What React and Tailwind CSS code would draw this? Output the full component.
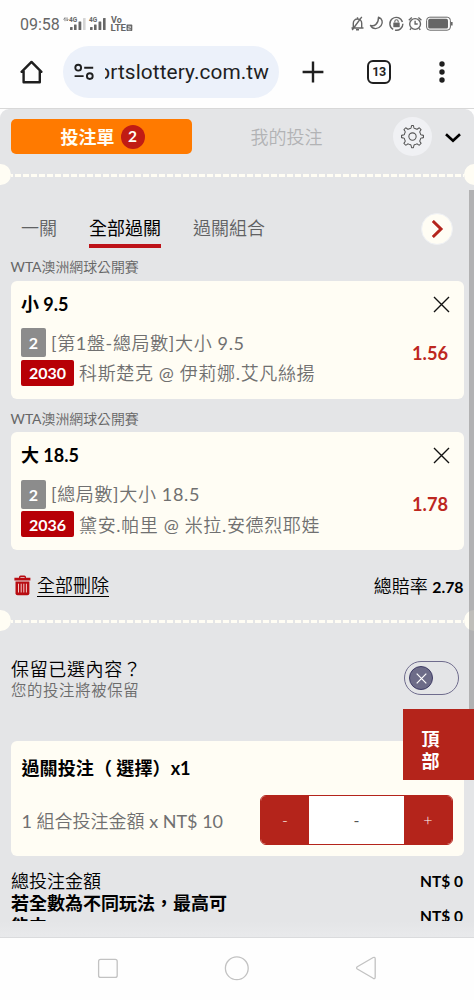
import React, { useState } from 'react';

const BETS = [
  {
    id: 1,
    league: 'WTA澳洲網球公開賽',
    pick: '小 9.5',
    legs: '2',
    market: '[第1盤-總局數]大小 9.5',
    code: '2030',
    match: '科斯楚克 @ 伊莉娜.艾凡絲揚',
    odds: '1.56',
  },
  {
    id: 2,
    league: 'WTA澳洲網球公開賽',
    pick: '大 18.5',
    legs: '2',
    market: '[總局數]大小 18.5',
    code: '2036',
    match: '黛安.帕里 @ 米拉.安德烈耶娃',
    odds: '1.78',
  },
];

const TABS = ['一關', '全部過關', '過關組合'];

// Status bar: signal bars on the left
const SignalIcons = () => (
  <svg className="mt-[2px]" width="72" height="18" viewBox="0 0 72 18" fill="#666" fontFamily="Roboto, sans-serif" fontWeight="700">
    <path d="M1.6 3.6 3 1.6v3.6M5 1.4v3.6l1.3-1.8" fill="none" stroke="#777" strokeWidth="0.9" />
    <text x="7" y="6" fontSize="6.5">4G</text>
    <rect x="8" y="11" width="2.6" height="3" rx="0.5" />
    <rect x="12" y="8.5" width="2.6" height="5.5" rx="0.5" />
    <rect x="16.5" y="5.5" width="2.8" height="8.5" rx="0.5" />
    <rect x="21" y="2" width="2.6" height="12" rx="0.5" fill="#d4d4d4" />
    <text x="27" y="6" fontSize="6.5">4G</text>
    <rect x="28" y="11" width="2.6" height="3" rx="0.5" />
    <rect x="32" y="8.5" width="2.6" height="5.5" rx="0.5" />
    <rect x="36.5" y="5.5" width="2.8" height="8.5" rx="0.5" />
    <rect x="41" y="2" width="2.6" height="12" rx="0.5" />
    <text x="49" y="7" fontSize="9">Vo</text>
    <text x="48.5" y="15" fontSize="9" textLength="15.5" lengthAdjust="spacingAndGlyphs">LTE</text>
    <rect x="64.5" y="8.6" width="5.8" height="6.4" rx="0.8" />
    <path d="M66 10.3h2.4v1.7h-2.2v1.8h2.6" fill="none" stroke="#fff" strokeWidth="0.7" />
  </svg>
);

const StatusIcons = () => (
  <svg width="104" height="18" viewBox="0 0 104 18" fill="none" stroke="#666" strokeWidth="1.4">
    {/* muted bell */}
    <path d="M1.5 13h12M3.3 13V8.2a4.2 4.2 0 0 1 8.4 0V13M7.5 3.8V2.3M6 14.8h3M2.2 15 11.8 1.8" />
    {/* moon */}
    <path d="M28.5 2.2c3.8 1.4 4.8 5.4 2.6 8.4-2.6 3.6-8.4 4.4-10.6-.2 3.8 1.4 8-1.4 8-8.2z" strokeLinejoin="round" />
    {/* rotation lock */}
    <path d="M43.2 14.4A6.4 6.4 0 1 1 52.4 7M52.9 8.8a6.4 6.4 0 0 1-7.9 6.3" />
    <rect x="43.3" y="7.6" width="6.4" height="4.6" fill="#666" stroke="none" />
    <path d="M44.8 7.6V6.4a1.7 1.7 0 0 1 3.4 0v1.2" strokeWidth="1.1" />
    {/* alarm */}
    <circle cx="65.1" cy="9" r="5.4" />
    <path d="M65.1 5.8V9h2.6M58.8 5.2l3-2.8M71.4 5.2l-3-2.8M61 13.4l-1 1.4M69.2 13.4l1 1.4" />
    {/* battery */}
    <rect x="76.6" y="2.2" width="23.8" height="13" rx="3.2" strokeWidth="1" />
    <rect x="78.2" y="3.8" width="19.8" height="9.8" rx="1.6" fill="#666" stroke="none" />
    <path d="M101.8 7v3.4" strokeWidth="1.6" />
  </svg>
);

const HomeIcon = () => (
  <svg width="26" height="26" viewBox="0 0 26 26" fill="none" stroke="#1f1f1f" strokeWidth="2.4" strokeLinejoin="round" strokeLinecap="round">
    <path d="M2.6 12.8 12.5 2.9l9.9 9.9M4.6 12v11.3h16.2V12" />
  </svg>
);

const TuneIcon = () => (
  <svg width="20" height="18" viewBox="0 0 20 18" fill="none" stroke="#1f1f1f" strokeWidth="1.9">
    <circle cx="4.2" cy="4.7" r="2.9" />
    <path d="M10.2 4.7h9M.6 13.1h9" />
    <circle cx="15.8" cy="13.1" r="2.9" />
  </svg>
);

const GearIcon = () => (
  <svg width="25" height="25" viewBox="0 0 26 26" fill="none" stroke="#555" strokeWidth="1.1" strokeLinejoin="round">
    <circle cx="13" cy="13" r="3.8" />
    <path d="M11.2 4.5c.5-.2.6-2.6.9-2.9h1.8c.3.3.4 2.7.9 2.9.8.2 2 .6 2.7 1 .5.2 2-1.6 2.5-1.6l1.9 1.9c0 .5-1.6 2-1.4 2.5.4.7.8 1.9 1 2.7.2.5 2.6.6 2.9.9v2.2c-.3.3-2.7.4-2.9.9-.2.8-.6 2-1 2.7-.2.5 1.4 2 1.4 2.5L20 22.1c-.5 0-2-1.6-2.5-1.4-.7.4-1.9.8-2.7 1-.5.2-.6 2.6-.9 2.9h-1.8c-.3-.3-.4-2.7-.9-2.9-.8-.2-2-.6-2.7-1-.5-.2-2 1.4-2.5 1.4l-1.9-1.9c0-.5 1.6-2 1.4-2.5-.4-.7-.8-1.9-1-2.7-.2-.5-2.6-.6-2.9-.9v-2.2c.3-.3 2.7-.4 2.9-.9.2-.8.6-2 1-2.7.2-.5-1.4-2-1.4-2.5L6 3.9c.5 0 2 1.8 2.5 1.6.7-.4 1.9-.8 2.7-1z" />
  </svg>
);

const TrashIcon = () => (
  <svg width="17" height="21" viewBox="0 0 17 21" fill="#b80c12">
    <path d="M5 2.2A1.6 1.6 0 0 1 6.6.5h3.8A1.6 1.6 0 0 1 12 2.2v.6h4.4v2.6H.4V2.8H5zM6.4 2.8h4.2v-.9H6.4z" />
    <path d="M1.5 6.4h13.9v11.9a2 2 0 0 1-2 2H3.5a2 2 0 0 1-2-2z" />
    <path d="M4.5 8.7v8.8M7.2 8.7v8.8M9.8 8.7v8.8M12.4 8.7v8.8" stroke="#f3c9c9" strokeWidth="1" />
  </svg>
);

const Perforation = () => (
  <div className="flex h-[21px] shrink-0 items-center justify-between">
    <div className="-ml-[10.5px] size-[21px] shrink-0 rounded-full bg-[#fffdf4]" />
    <div className="mt-[2px] h-[3px] flex-1 bg-[repeating-linear-gradient(90deg,#fffdf4_0px,#fffdf4_2px,transparent_2px,transparent_4.5px,#fffdf4_4.5px,#fffdf4_8px)]" />
    <div className="-mr-[11px] size-[21px] shrink-0 rounded-full bg-[#fffdf4]" />
  </div>
);

const BetCard = ({ bet, onRemove }) => (
  <section className="pl-[10.5px] pr-[10.5px]">
    <p className="h-[27px] font-['Lato','Noto_Sans_CJK_TC_DemiLight','Noto_Sans_CJK_TC',sans-serif] text-[13.9px] leading-[27px] text-[#666]">{bet.league}</p>
    <div className="mt-[0.5px] mb-[6px] flex h-[118px] justify-between rounded-[6px] bg-[#fffdf4] pl-[10.5px] pr-[14px]">
      <div>
        <h3 className="mt-[11px] h-[27px] text-[18px] font-bold leading-[25px] text-black">{bet.pick}</h3>
        <div className="mt-[9px] flex h-[30px] items-center text-[18px] tracking-[0.65px] text-[#707070]">
          <span className="mr-[5px] flex h-[29px] w-[25px] items-center justify-center rounded-[2px] bg-[#8c8c8c] pt-[1px] text-[16px] font-bold tracking-normal text-white">
            {bet.legs}
          </span>
          <span className="whitespace-nowrap pt-[1px] font-['Lato','Noto_Sans_CJK_TC_DemiLight','Noto_Sans_CJK_TC',sans-serif]">{bet.market}</span>
        </div>
        <div className="mt-[1px] flex h-[28px] items-center text-[18px] tracking-[0.65px] text-[#707070]">
          <span className="mr-[5px] flex h-[26px] w-[53px] items-center justify-center rounded-[2px] bg-[#b70006] pt-[1px] text-[16px] font-bold tracking-normal text-white">
            {bet.code}
          </span>
          <span className="whitespace-nowrap pt-[2px] font-['Lato','Noto_Sans_CJK_TC_DemiLight','Noto_Sans_CJK_TC',sans-serif]">{bet.match}</span>
        </div>
      </div>
      <div className="flex flex-col items-end">
        <button className="mt-[15px]" onClick={() => onRemove(bet.id)}>
          <svg width="17" height="17" viewBox="0 0 17 17" stroke="#111" strokeWidth="1.4">
            <path d="M1 1l15 15M16 1 1 16" />
          </svg>
        </button>
        <span className="mr-[1.5px] mt-[27px] text-[18.2px] font-bold leading-[26px] text-[#bd271e]">{bet.odds}</span>
      </div>
    </div>
  </section>
);

export default function App() {
  const [bets, setBets] = useState(BETS);
  const [tab, setTab] = useState('全部過關');

  const removeBet = (id) => setBets(prev => prev.filter(b => b.id !== id));

  return (
    <div className="flex h-[1000px] w-[474px] flex-col overflow-hidden bg-[#fefefe] font-['Lato','Noto_Sans_CJK_TC',sans-serif]">
      {/* Phone status bar */}
      <div className="flex h-[46px] shrink-0 items-center justify-between pl-[20px] pr-[20px] pt-[2px] font-['Roboto',sans-serif]">
        <div className="flex items-center">
          <span className="w-[42px] pt-[1px] text-[16px] text-[#666]">09:58</span>
          <SignalIcons />
        </div>
        <StatusIcons />
      </div>

      {/* Browser toolbar */}
      <div className="flex h-[63px] shrink-0 items-start border-b border-[#d8d8d8] pl-[19px] font-['Roboto',sans-serif]">
        <div className="flex h-[52px] w-[44px] items-center"><HomeIcon /></div>
        <div className="flex h-[52px] w-[216px] items-center rounded-full bg-[#ecf1fa] pl-[11px]">
          <TuneIcon />
          <div className="ml-[11px] flex w-[164px] justify-end overflow-hidden whitespace-nowrap pt-[2px] text-[20.8px] tracking-[0.1px] text-[#1f1f1f]">
            <span>ortslottery.com.tw</span>
          </div>
        </div>
        <div className="ml-[23px] flex h-[52px] items-center">
          <svg width="22" height="22" viewBox="0 0 22 22" stroke="#1f1f1f" strokeWidth="2.4">
            <path d="M11 .6v20.8M.6 11h20.8" />
          </svg>
          <span className="ml-[43px] flex size-[24px] items-center justify-center rounded-[6px] border-2 border-[#1f1f1f] text-[12.5px] font-bold tracking-[-0.5px] text-[#1f1f1f]">
            13
          </span>
          <svg className="ml-[48px]" width="6" height="22" viewBox="0 0 6 22" fill="#1f1f1f">
            <circle cx="3" cy="3" r="2.7" />
            <circle cx="3" cy="11" r="2.7" />
            <circle cx="3" cy="19" r="2.7" />
          </svg>
        </div>
      </div>

      {/* Bet slip */}
      <main className="relative h-[829px] shrink-0 overflow-hidden rounded-t-[9px] border-b border-[#dadbdd] bg-[#e4e5e7]">
        <div className="flex h-[812px] flex-col overflow-hidden">
          <header className="flex h-[55px] shrink-0 items-center pl-[10.5px] pr-[12px]">
            <button className="flex h-[35px] w-[181px] items-center justify-center gap-[6px] rounded-[5px] bg-[#ff7a00] pl-[3px] text-[18px] font-bold text-[#fffdf4]">
              <span className="pt-[1px]">投注單</span>
              <span className="flex size-[24px] items-center justify-center rounded-full bg-[#c01c14] text-[15.5px]">2</span>
            </button>
            <button className="w-[190px] pt-[2px] font-['Lato','Noto_Sans_CJK_TC_DemiLight','Noto_Sans_CJK_TC',sans-serif] text-[18px] text-[#b2b3b5]">我的投注</button>
            <button className="ml-[11px] flex size-[39px] items-center justify-center rounded-full bg-[#f0f1f4]">
              <GearIcon />
            </button>
            <svg className="ml-[13.5px] mt-[2px]" width="16" height="10" viewBox="0 0 16 10" fill="none" stroke="#000" strokeWidth="2.6">
              <path d="M1 1.2 8 7.8 15 1.2" />
            </svg>
          </header>

          <Perforation />

          <nav className="flex h-[68px] shrink-0 items-start justify-between pl-[21px] pr-[21px]">
            <div className="flex gap-[32px] pt-[30px] text-[18px] leading-[27px]">
              {TABS.map(t => (
                <button
                  key={t}
                  onClick={() => setTab(t)}
                  className={t === tab
                    ? 'flex h-[33px] items-start border-b-4 border-[#bd1218] text-black'
                    : "flex h-[33px] items-start font-['Lato','Noto_Sans_CJK_TC_DemiLight','Noto_Sans_CJK_TC',sans-serif] text-[#606163]"}
                >
                  {t}
                </button>
              ))}
            </div>
            <button className="mt-[28px] flex size-[32px] items-center justify-center rounded-full border border-[#eef0f4] bg-[#fffdf4]">
              <svg className="-mr-[1px]" width="12" height="18" viewBox="0 0 12 18" fill="none" stroke="#b4241b" strokeWidth="3">
                <path d="M.8 1 9 9 .8 17" />
              </svg>
            </button>
          </nav>

          {bets.map(bet => <BetCard key={bet.id} bet={bet} onRemove={removeBet} />)}

          <div className="flex h-[54px] shrink-0 items-center justify-between pl-[14px] pr-[10.5px] pt-[5px] font-['Lato','Noto_Sans_CJK_TC_DemiLight','Noto_Sans_CJK_TC',sans-serif] text-[18px]">
            <button className="flex items-center gap-[6px]" onClick={() => setBets([])}>
              <TrashIcon />
              <span className="border-b border-black leading-[21px]">全部刪除</span>
            </button>
            <p className="pt-[1px]">總賠率 <b className="text-[15.8px]">2.78</b></p>
          </div>

          <Perforation />

          <div className="flex h-[110px] shrink-0 items-start justify-between pl-[11px] pr-[15px] pt-[26px] font-['Lato','Noto_Sans_CJK_TC_DemiLight','Noto_Sans_CJK_TC',sans-serif]">
            <div>
              <p className="h-[23px] text-[18px] leading-[24px] tracking-[0.65px]">保留已選內容？</p>
              <p className="h-[20px] text-[15.4px] leading-[20px] tracking-[0.65px] text-[#6c6c6c]">您的投注將被保留</p>
            </div>
            <div className="mt-[4px] flex h-[34px] w-[55px] items-center rounded-full border-[1.5px] border-[#6f6c8d] pl-[4px]">
              <span className="flex size-[24px] items-center justify-center rounded-full border border-[#3f3c66] bg-[#6d6c88]">
                <svg width="11" height="11" viewBox="0 0 11 11" stroke="#fff" strokeWidth="1.2">
                  <path d="M.7.7l9.6 9.6M10.3.7.7 10.3" />
                </svg>
              </span>
            </div>
          </div>

          <section className="ml-[10.5px] mr-[10.5px] h-[115px] shrink-0 rounded-[6px] bg-[#fffdf4] pl-[11px] pr-[10.5px] pt-[13px]">
            <h3 className="h-[27px] whitespace-pre text-[18.1px] font-bold leading-[28px]">過關投注（ 選擇）x1</h3>
            <div className="mt-[14px] flex items-center justify-between">
              <span className="whitespace-nowrap pt-[2px] font-['Lato','Noto_Sans_CJK_TC_DemiLight','Noto_Sans_CJK_TC',sans-serif] text-[18px] text-[#707070]">1 組合投注金額 x NT$ 10</span>
              <div className="flex h-[50px] w-[193px] overflow-hidden rounded-[6px] border border-[#b4241b] bg-white">
                <button className="w-[48px] bg-[#b4241b] text-[16px] font-light text-[#fffdf4]">-</button>
                <span className="flex flex-1 items-center justify-center text-[16px] text-[#555]">-</span>
                <button className="w-[48px] bg-[#b4241b] text-[16px] font-light text-[#fffdf4]">+</button>
              </div>
            </div>
          </section>

          <div className="flex shrink-0 flex-col pl-[11px] pr-[11px] pt-[14px] text-[18px] leading-[22px]">
            <div className="flex h-[22px] justify-between">
              <span className="font-['Lato','Noto_Sans_CJK_TC_DemiLight','Noto_Sans_CJK_TC',sans-serif]">總投注金額</span>
              <b className="text-[15.5px]">NT$ 0</b>
            </div>
            <div className="flex items-center justify-between font-bold">
              <span className="w-[222px] leading-[23px]">若全數為不同玩法，最高可能中</span>
              <span className="pt-[2px] text-[15.5px]">NT$ 0</span>
            </div>
          </div>
        </div>
        <div className="h-[17px] bg-linear-to-b from-[#e4e5e7] to-[#e9eaec]" />

        {/* scrollbar thumb and back-to-top tab float over the slip */}
        <div className="absolute right-0 top-[81px] h-[540px] w-[5px] bg-[#808080]/50" />
        <button className="absolute right-0 top-[600px] flex h-[71px] w-[71px] justify-center bg-[#b4241b] pr-[16px] pt-[19px] text-[18px] font-bold leading-[22px] text-white">
          <span className="w-[18px]">頂部</span>
        </button>
      </main>

      {/* Android navigation */}
      <div className="flex flex-1 items-center justify-center">
        <svg width="474" height="62" viewBox="0 0 474 62" fill="none" stroke="#c2c2c2" strokeWidth="1.3" strokeLinejoin="round">
          <rect x="98.6" y="21.4" width="18.6" height="18" rx="2" />
          <circle cx="236.8" cy="30.3" r="11.4" />
          <path d="M357.3 28.8 373.2 19.5q2-.8 2 1.3V39q0 2.2-2 1.3L357.3 31q-1.4-1.1 0-2.2z" />
        </svg>
      </div>
    </div>
  );
}
